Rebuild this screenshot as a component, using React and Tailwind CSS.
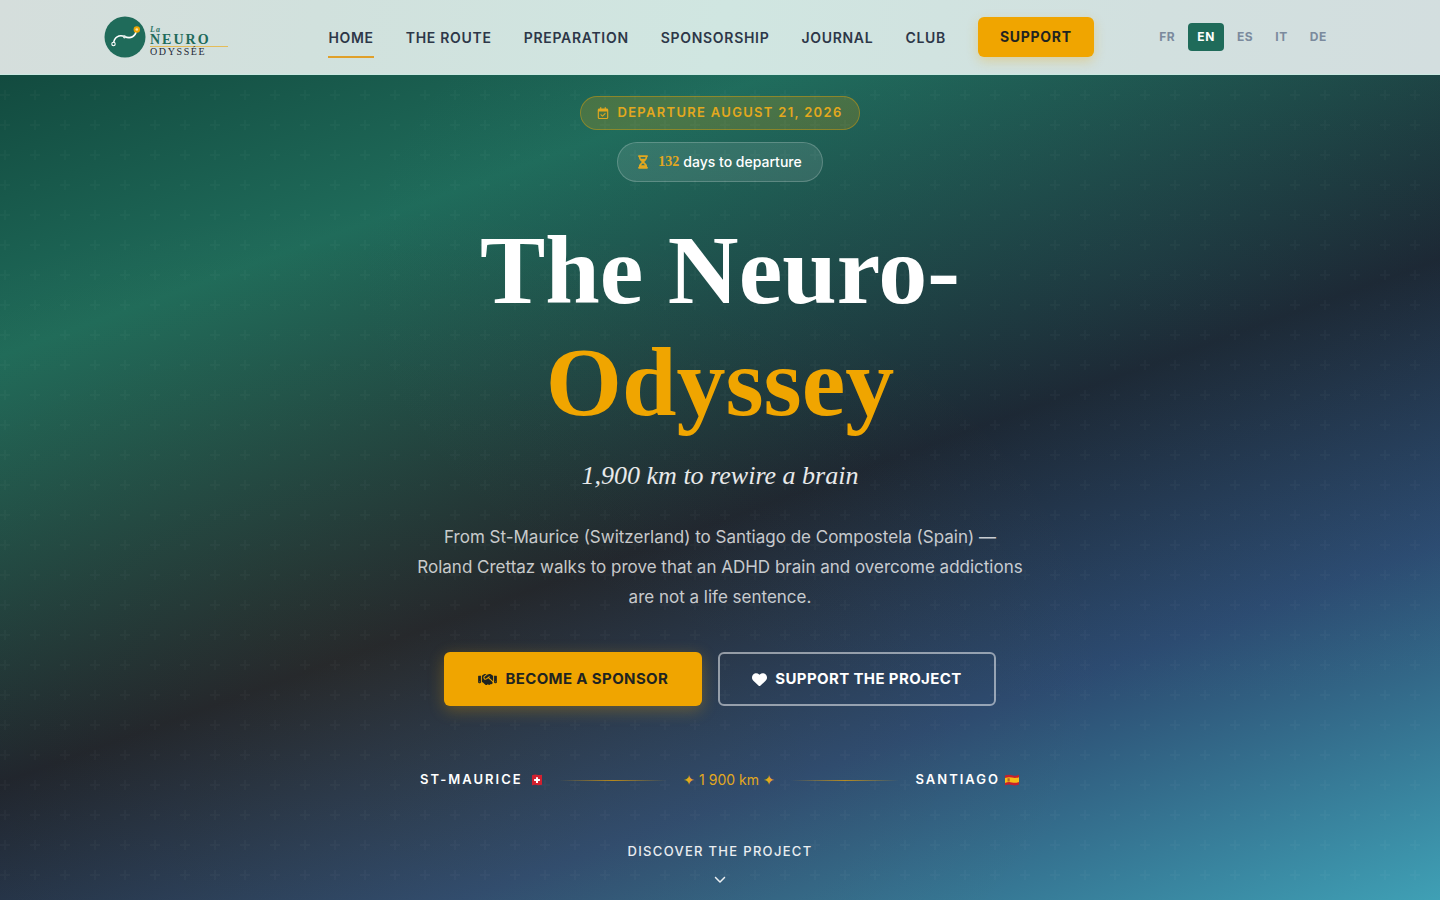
import React from 'react';
import {
    FaRegCalendarCheck,
    FaHourglassHalf,
    FaHandshake,
    FaHeart,
    FaChevronDown,
} from 'react-icons/fa6';

const navItems = [
    { label: 'Home', href: '#home', active: true },
    { label: 'The Route', href: '#route' },
    { label: 'Preparation', href: '#preparation' },
    { label: 'Sponsorship', href: '#sponsorship' },
    { label: 'Journal', href: '#journal' },
    { label: 'Club', href: '#club' },
];

const languages = ['FR', 'EN', 'ES', 'IT', 'DE'];

const Logo = () => (
    <svg viewBox="0 0 168 46" className="w-[168px] h-[46px]" role="img" aria-label="La Neuro Odyssée">
        <circle cx="21" cy="23" r="20.5" fill="#1f6b5a" />
        <path
            d="M9.5 30 C10 23 15 20.5 20.5 22.5 C27 25.5 31.5 22 32.5 16.5"
            fill="none"
            stroke="#fff"
            strokeWidth="1.6"
            strokeLinecap="round"
        />
        <circle cx="9.5" cy="30" r="1.7" fill="#1f6b5a" stroke="#fff" strokeWidth="1.1" />
        <circle cx="20.5" cy="22.8" r="1.6" fill="#dcebe6" />
        <circle cx="32.8" cy="15.5" r="3.2" fill="#f0a500" />
        <circle cx="32.8" cy="15.5" r="1.3" fill="#fbe3a6" />
        <path d="M46 32.5H124" stroke="#f0a500" strokeWidth="0.8" opacity="0.75" />
        <g fontFamily="'Liberation Serif', serif">
            <text x="46" y="18" fontSize="8" fontWeight="700" fontStyle="italic" letterSpacing="1" fill="#2f7667">La</text>
            <text x="46" y="30" fontSize="14" fontWeight="700" letterSpacing="2" fill="#1f6b5a">NEURO</text>
            <text x="46" y="41" fontSize="10" letterSpacing="1.6" fill="#1f2937">ODYSSÉE</text>
        </g>
    </svg>
);

const Header = () => (
    <header className="relative z-10 bg-[linear-gradient(100deg,#d5dedc_0%,#d1e1dd_22%,#d0e6e1_50%,#d2e0df_80%,#d3dedf_100%)] border-b border-[#c9e8e1]">
        <div className="max-w-7xl mx-auto px-6 h-[74px] flex items-center justify-between">
            <a href="#home">
                <Logo />
            </a>
            <nav className="flex items-center gap-8">
                {navItems.map((item) => (
                    <a
                        key={item.label}
                        href={item.href}
                        className={`pt-3 pb-2 border-b-2 text-sm leading-5 font-semibold uppercase tracking-wider text-[#2d3748] ${
                            item.active ? 'border-[#e0a02a]' : 'border-transparent'
                        }`}
                    >
                        {item.label}
                    </a>
                ))}
                <a
                    href="#support"
                    className="h-10 px-[22px] flex items-center rounded-md bg-[#f0a500] text-sm font-bold uppercase tracking-wider text-[#1f2421] shadow-[0_4px_12px_rgba(240,165,0,0.3)]"
                >
                    Support
                </a>
            </nav>
            <div className="flex items-center gap-1">
                {languages.map((lang) => (
                    <button
                        key={lang}
                        type="button"
                        className={`h-7 px-[9px] rounded text-xs font-bold tracking-wider ${
                            lang === 'EN' ? 'bg-[#1f6b5a] text-white' : 'text-[#7b8a9d]'
                        }`}
                    >
                        {lang}
                    </button>
                ))}
            </div>
        </div>
    </header>
);

const Backdrop = () => (
    <div className="absolute inset-0 pointer-events-none bg-[radial-gradient(ellipse_at_25%_75%,rgba(240,165,0,0.06)_0%,transparent_50%),radial-gradient(ellipse_at_80%_30%,rgba(61,160,181,0.08)_0%,transparent_50%)]">
        <svg className="w-full h-full" aria-hidden="true">
            <defs>
                <pattern id="plus" width="30" height="30" patternUnits="userSpaceOnUse">
                    <path d="M6 4V0H4v4H0v2h4v4h2V6h4V4H6z" fill="#fff" fillOpacity="0.024" />
                </pattern>
            </defs>
            <rect width="100%" height="100%" fill="url(#plus)" />
        </svg>
    </div>
);

const SwissFlag = () => (
    <svg viewBox="0 0 12 12" className="w-3 h-3" aria-hidden="true">
        <path d="M1 1.2Q4 .2 6 .8T11 .8V10.8Q8 11.6 6 11T1 11.2Z" fill="#d3202f" />
        <path d="M5 3.2h2v1.9h1.9v2H7V9H5V7.1H3.1v-2H5Z" fill="#fff" />
    </svg>
);

const SpanishFlag = () => (
    <svg viewBox="0 0 16 12" className="w-4 h-3" aria-hidden="true">
        <path d="M1 1.6Q4.5 0 8 1.2T15 .8V10.4Q11.5 12 8 11T1 11.3Z" fill="#c8202b" />
        <path d="M1 4Q4.5 2.5 8 3.6T15 3.2V8Q11.5 9.5 8 8.4T1 8.9Z" fill="#f6bd16" />
        <path d="M3.5 4.3h2.2v3.2H3.5Z" fill="#b5622a" />
    </svg>
);

const RouteLine = () => (
    <span className="flex-1 h-px bg-linear-to-r from-transparent via-[#f0a500]/70 to-transparent" />
);

const Hero = () => (
    <main className="relative z-10 flex-1 px-6 pt-[21px] pb-3 flex flex-col items-center text-center">
        <div className="h-[34px] px-4 flex items-center gap-2 rounded-full border border-[#f0a500]/40 bg-[#f0a500]/20 text-[13px] font-semibold uppercase tracking-widest text-[#e3a81e]">
            <FaRegCalendarCheck className="w-3 h-3" />
            Departure August 21, 2026
        </div>

        <div className="mt-3 h-10 px-5 flex items-center rounded-full border border-white/20 bg-white/10 text-sm font-medium text-white">
            <FaHourglassHalf className="w-[10px] h-[14px] mr-[10px] text-[#e3a81e]" />
            <span className="mr-1 font-['Liberation_Serif',serif] font-bold text-sm text-[#e3a81e]">132</span>
            days to departure
        </div>

        <h1 className="mt-8 font-['Liberation_Serif',serif] font-bold text-[98px] leading-[112px] text-white">
            The Neuro-
            <span className="block text-[#f0a500]">Odyssey</span>
        </h1>
        <p className="mt-5 font-['Liberation_Serif',serif] italic text-[26px] leading-9 text-white/90">
            1,900 km to rewire a brain
        </p>

        <p className="mt-7 max-w-[608px] text-[17px] leading-[30px] text-white/75">
            From St-Maurice (Switzerland) to Santiago de Compostela (Spain) — Roland Crettaz walks to
            prove that an ADHD brain and overcome addictions are not a life sentence.
        </p>

        <div className="mt-10 flex gap-4">
            <a
                href="#sponsorship"
                className="h-[54px] px-[34px] flex items-center gap-2 rounded-md bg-[#f0a500] text-[15px] font-bold uppercase tracking-wide text-[#1f2421] shadow-[0_4px_16px_rgba(240,165,0,0.3)]"
            >
                <FaHandshake className="w-[19px] h-[15px]" />
                Become a Sponsor
            </a>
            <a
                href="#support"
                className="h-[54px] px-8 flex items-center gap-2 rounded-md border-2 border-white/50 text-[15px] font-bold uppercase tracking-wide text-white"
            >
                <FaHeart className="w-[15px] h-[15px]" />
                Support the Project
            </a>
        </div>

        <div className="mt-16 w-full max-w-[600px] flex items-center gap-4">
            <span className="flex items-center gap-2 text-[13px] font-semibold uppercase tracking-[2px] text-white">
                St-Maurice <SwissFlag />
            </span>
            <RouteLine />
            <span className="text-sm text-[#e3a81e]">✦ 1 900 km ✦</span>
            <RouteLine />
            <span className="flex items-center gap-1 text-[13px] font-semibold uppercase tracking-[2px] text-white">
                Santiago <SpanishFlag />
            </span>
        </div>

        <a
            href="#project"
            className="mt-[51px] flex flex-col items-center gap-3 text-[13px] leading-5 font-medium uppercase tracking-widest text-white/90"
        >
            Discover the project
            <FaChevronDown className="w-3 h-3" />
        </a>
    </main>
);

const App = () => {
    return (
        <div className="relative min-h-screen flex flex-col font-[Inter,sans-serif] bg-[linear-gradient(160deg,#0f4238_0%,#1f6b5a_25%,#1b222e_55%,#2c4a70_75%,#3fa0b5_100%)]">
            <Backdrop />
            <Header />
            <Hero />
        </div>
    );
};

export default App;
